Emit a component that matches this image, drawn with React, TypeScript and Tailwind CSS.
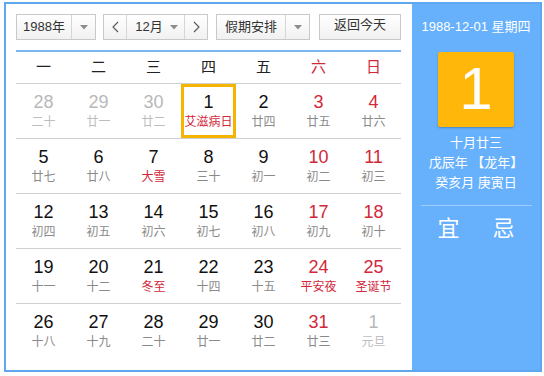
import React from "react";

const RED = "text-[#d3283a]";

type Cell = { n: string; l: string; nc: string; lc: string; sel?: boolean };

const G = "text-[#b8b8b8]";
const B = "text-[#111]";
const R = "text-[#d3283a]";
const LG = "text-[#bdbdbd]";
const L = "text-[#8a8a8a]";

const rows: Cell[][] = [
  [
    { n: "28", l: "二十", nc: G, lc: LG },
    { n: "29", l: "廿一", nc: G, lc: LG },
    { n: "30", l: "廿二", nc: G, lc: LG },
    { n: "1", l: "艾滋病日", nc: B, lc: R, sel: true },
    { n: "2", l: "廿四", nc: B, lc: L },
    { n: "3", l: "廿五", nc: R, lc: L },
    { n: "4", l: "廿六", nc: R, lc: L },
  ],
  [
    { n: "5", l: "廿七", nc: B, lc: L },
    { n: "6", l: "廿八", nc: B, lc: L },
    { n: "7", l: "大雪", nc: B, lc: R },
    { n: "8", l: "三十", nc: B, lc: L },
    { n: "9", l: "初一", nc: B, lc: L },
    { n: "10", l: "初二", nc: R, lc: L },
    { n: "11", l: "初三", nc: R, lc: L },
  ],
  [
    { n: "12", l: "初四", nc: B, lc: L },
    { n: "13", l: "初五", nc: B, lc: L },
    { n: "14", l: "初六", nc: B, lc: L },
    { n: "15", l: "初七", nc: B, lc: L },
    { n: "16", l: "初八", nc: B, lc: L },
    { n: "17", l: "初九", nc: R, lc: L },
    { n: "18", l: "初十", nc: R, lc: L },
  ],
  [
    { n: "19", l: "十一", nc: B, lc: L },
    { n: "20", l: "十二", nc: B, lc: L },
    { n: "21", l: "冬至", nc: B, lc: R },
    { n: "22", l: "十四", nc: B, lc: L },
    { n: "23", l: "十五", nc: B, lc: L },
    { n: "24", l: "平安夜", nc: R, lc: R },
    { n: "25", l: "圣诞节", nc: R, lc: R },
  ],
  [
    { n: "26", l: "十八", nc: B, lc: L },
    { n: "27", l: "十九", nc: B, lc: L },
    { n: "28", l: "二十", nc: B, lc: L },
    { n: "29", l: "廿一", nc: B, lc: L },
    { n: "30", l: "廿二", nc: B, lc: L },
    { n: "31", l: "廿三", nc: R, lc: L },
    { n: "1", l: "元旦", nc: G, lc: LG },
  ],
];

const Caret = () => (
  <svg width="8" height="5" viewBox="0 0 8 5">
    <path d="M0 0 L8 0 L4 4.5 Z" fill="#8c8c8c" />
  </svg>
);

const Chev = ({ dir }: { dir: "l" | "r" }) => (
  <svg width="7" height="12" viewBox="0 0 7 12">
    <path
      d={dir === "l" ? "M6 1 L1 6 L6 11" : "M1 1 L6 6 L1 11"}
      stroke="#555"
      strokeWidth="1.1"
      fill="none"
    />
  </svg>
);

const box =
  "h-[26px] border border-[#c9c9c9] bg-gradient-to-b from-white to-[#f1f1f1] flex items-stretch text-[13px] text-[#333]";

export default function App() {
  const weekdays = ["一", "二", "三", "四", "五", "六", "日"];
  return (
    <div
      className="w-[544px] h-[376px] bg-white pt-[2px] pl-[4px]"
      style={{ fontFamily: '"Liberation Sans", "Noto Sans CJK SC", sans-serif' }}
    >
      <div className="w-[538px] h-[370px] border-2 border-[#5fa8ef] flex">
        <div className="w-[406px] h-full pl-[10px] pt-[10px]">
          <div className="flex items-center">
            <div className={`${box} w-[80px]`}>
              <div className="w-[55px] flex items-center justify-center border-r border-[#d6d6d6]">1988年</div>
              <div className="flex-1 flex items-center justify-center">
                <Caret />
              </div>
            </div>
            <div className={`${box} w-[105px] ml-[7px]`}>
              <div className="w-[23px] flex items-center justify-center border-r border-[#d6d6d6]">
                <Chev dir="l" />
              </div>
              <div className="flex-1 flex items-center justify-center gap-[7px] border-r border-[#d6d6d6] pl-[2px]">
                <span>12月</span>
                <Caret />
              </div>
              <div className="w-[22px] flex items-center justify-center">
                <Chev dir="r" />
              </div>
            </div>
            <div className={`${box} w-[94px] ml-[8px]`}>
              <div className="w-[69px] flex items-center justify-center border-r border-[#d6d6d6]">假期安排</div>
              <div className="flex-1 flex items-center justify-center">
                <Caret />
              </div>
            </div>
            <div className={`${box} w-[82px] ml-[9px] justify-center items-center`}>返回今天</div>
          </div>
          <div className="w-[385px] h-[2px] bg-[#7cb7ef] mt-[10px]" />
          <div className="w-[385px] grid grid-cols-7 h-[32px] border-b border-[#cfcfcf] items-center">
            {weekdays.map((w, i) => (
              <div
                key={w}
                className={`text-center text-[15px] ${i >= 5 ? RED : "text-[#222]"}`}
              >
                {w}
              </div>
            ))}
          </div>
          {rows.map((row, ri) => (
            <div
              key={ri}
              className={`w-[385px] grid grid-cols-7 h-[55px] ${ri < 4 ? "border-b border-[#cfcfcf]" : ""}`}
            >
              {row.map((c, ci) => (
                <div
                  key={ci}
                  className={`flex flex-col items-center h-[54px] ${
                    c.sel ? "border-[3px] border-[#f4b400] pt-[5px]" : "pt-[8px]"
                  }`}
                >
                  <div className={`text-[18px] leading-[20px] ${c.nc}`}>{c.n}</div>
                  <div className={`text-[12px] leading-[16px] mt-[2px] whitespace-nowrap ${c.lc}`}>{c.l}</div>
                </div>
              ))}
            </div>
          ))}
        </div>
        <div className="flex-1 h-full bg-[#67b0fc] flex flex-col items-center text-white pt-[15px]">
          <div className="text-[13px] leading-[16px]">1988-12-01 星期四</div>
          <div className="mt-[17px] w-[76px] h-[75px] bg-[#ffb80a] rounded-[2px] shadow-[0_1px_2px_rgba(0,0,0,0.25)] flex items-center justify-center text-[60px] leading-none pb-[2px]">
            1
          </div>
          <div className="mt-[6px] text-[13px] leading-[20px]">十月廿三</div>
          <div className="text-[13px] leading-[20px]">戊辰年 【龙年】</div>
          <div className="text-[13px] leading-[20px]">癸亥月 庚寅日</div>
          <div className="w-[111px] h-[1px] bg-[#9fcdfb] mt-[12px]" />
          <div className="flex gap-[33px] mt-[10px] text-[22px] leading-[26px]">
            <span>宜</span>
            <span>忌</span>
          </div>
        </div>
      </div>
    </div>
  );
}
